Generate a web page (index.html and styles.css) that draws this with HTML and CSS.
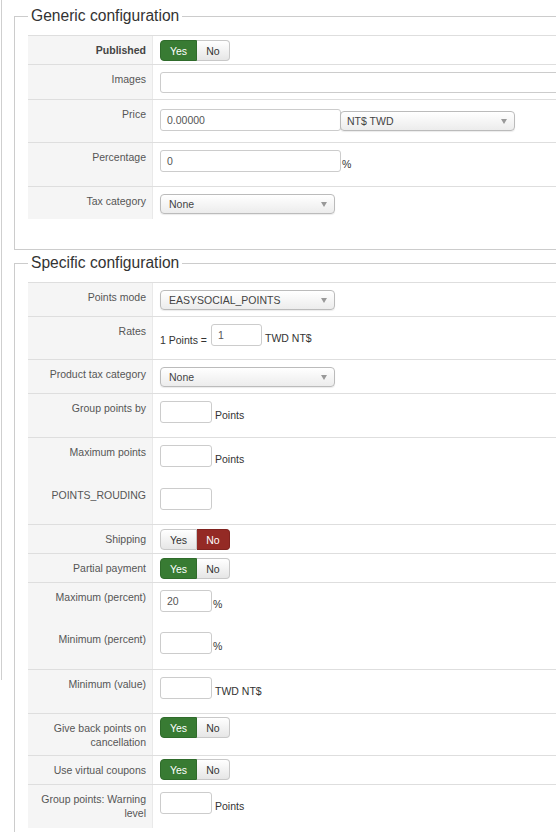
FILE: index.html
```html
<!DOCTYPE html>
<html>
<head>
<meta charset="utf-8">
<link rel="stylesheet" href="styles.css">
</head>
<body>
<div class="page">
  <div class="sidebar"></div>
  <div class="main">
    <fieldset class="box box-first">
      <legend>Generic configuration</legend>
      <div class="table">
        <div class="row h29">
          <div class="label bold">Published</div>
          <div class="value vt"><div class="toggle"><span class="btn yes on-green">Yes</span><span class="btn no">No</span></div></div>
        </div>
        <div class="row h35">
          <div class="label">Images</div>
          <div class="value"><span class="input wide"></span></div>
        </div>
        <div class="row h43">
          <div class="label">Price</div>
          <div class="value"><span class="input w180">0.00000</span><span class="select w175 sel-price"><span>NT$ TWD</span><span class="arrow"></span></span></div>
        </div>
        <div class="row h44">
          <div class="label">Percentage</div>
          <div class="value"><span class="input w180">0</span><span class="unit tight">%</span></div>
        </div>
        <div class="row h33">
          <div class="label">Tax category</div>
          <div class="value"><span class="select w175"><span>None</span><span class="arrow"></span></span></div>
        </div>
      </div>
    </fieldset>
    <fieldset class="box box-second">
      <legend>Specific configuration</legend>
      <div class="table">
        <div class="row h34">
          <div class="label">Points mode</div>
          <div class="value"><span class="select w175"><span>EASYSOCIAL_POINTS</span><span class="arrow"></span></span></div>
        </div>
        <div class="row h43">
          <div class="label">Rates</div>
          <div class="value"><span class="unit pre">1 Points =</span><span class="input w51">1</span><span class="unit">TWD NT$</span></div>
        </div>
        <div class="row h34">
          <div class="label">Product tax category</div>
          <div class="value"><span class="select w175"><span>None</span><span class="arrow"></span></span></div>
        </div>
        <div class="row h44">
          <div class="label">Group points by</div>
          <div class="value"><span class="input w52"></span><span class="unit">Points</span></div>
        </div>
        <div class="row h44">
          <div class="label">Maximum points</div>
          <div class="value"><span class="input w52"></span><span class="unit">Points</span></div>
        </div>
        <div class="row h43 noline">
          <div class="label">POINTS_ROUDING</div>
          <div class="value"><span class="input w52"></span></div>
        </div>
        <div class="row h29">
          <div class="label">Shipping</div>
          <div class="value vt"><div class="toggle"><span class="btn yes">Yes</span><span class="btn no on-red">No</span></div></div>
        </div>
        <div class="row h29">
          <div class="label">Partial payment</div>
          <div class="value vt"><div class="toggle"><span class="btn yes on-green">Yes</span><span class="btn no">No</span></div></div>
        </div>
        <div class="row h43">
          <div class="label">Maximum (percent)</div>
          <div class="value"><span class="input w52">20</span><span class="unit tight">%</span></div>
        </div>
        <div class="row h44 noline">
          <div class="label">Minimum (percent)</div>
          <div class="value"><span class="input w52"></span><span class="unit tight">%</span></div>
        </div>
        <div class="row h44">
          <div class="label">Minimum (value)</div>
          <div class="value"><span class="input w52"></span><span class="unit">TWD NT$</span></div>
        </div>
        <div class="row h42">
          <div class="label">Give back points on cancellation</div>
          <div class="value vt2"><div class="toggle"><span class="btn yes on-green">Yes</span><span class="btn no">No</span></div></div>
        </div>
        <div class="row h29">
          <div class="label">Use virtual coupons</div>
          <div class="value vt2"><div class="toggle"><span class="btn yes on-green">Yes</span><span class="btn no">No</span></div></div>
        </div>
        <div class="row h44">
          <div class="label">Group points: Warning level</div>
          <div class="value"><span class="input w52"></span><span class="unit">Points</span></div>
        </div>
      </div>
    </fieldset>
  </div>
</div>
</body>
</html>
```

FILE: styles.css
```css
html, body {
  margin: 0;
  padding: 0;
  background: #fff;
  overflow: hidden;
}
body {
  font-family: "Liberation Sans", Arial, Helvetica, sans-serif;
  font-size: 10.5px;
  color: #333;
}
.page {
  display: flex;
  align-items: flex-start;
  width: 720px;
}
.sidebar {
  width: 1px;
  height: 680px;
  border-right: 1px solid #cfcfcf;
  border-bottom: 1px solid #cfcfcf;
  box-sizing: border-box;
  flex: none;
  margin-left: 1px;
}
.main {
  margin-left: 12px;
  flex: 1;
}
.box {
  margin: 6px 0 0 0;
  padding: 0 0 29px 13px;
  border: 1px solid #cccccc;
  border-right: none;
  min-width: 0;
}
.box-first {
  margin-top: 7px;
  padding-bottom: 30px;
}
.box-second {
  margin-top: 4px;
}
legend {
  font-size: 15.6px;
  line-height: 18px;
  color: #333;
  padding: 0 3px;
  margin-left: 0;
}
.table {
  margin-top: 10px;
}
.row {
  display: grid;
  grid-template-columns: 125px 1fr;
  border-top: 1px solid #dedede;
  box-sizing: border-box;
}
.row.noline {
  border-top: none;
}
.h29 { height: 29px; }
.h33 { height: 33px; }
.h34 { height: 34px; }
.h35 { height: 35px; }
.h42 { height: 42px; }
.h43 { height: 43px; }
.h44 { height: 44px; }
.label {
  background: #f5f5f5;
  border-right: 1px solid #e9e9e9;
  text-align: right;
  padding: 7px 6px 0 8px;
  line-height: 14px;
  color: #555;
}
.label.bold {
  font-weight: bold;
  color: #444;
}
.value {
  padding: 7px 0 0 7px;
  display: flex;
  align-items: flex-end;
  align-self: start;
}
.value.vt {
  padding-top: 4px;
}
.value.vt2 {
  padding-top: 3px;
}
.input {
  display: flex;
  align-items: center;
  box-sizing: border-box;
  height: 22px;
  border: 1px solid #cccccc;
  border-radius: 3px;
  padding: 0 6px;
  color: #555;
  background: #fff;
  flex: none;
  line-height: 14px;
}
.input.wide { width: 440px; height: 21px; }
.w180 { width: 181px; }
.w52 { width: 52px; }
.w51 { width: 51px; }
.unit {
  line-height: 14px;
  margin: 0 0 1px 3px;
  color: #333;
}
.unit.tight {
  margin-left: 1px;
}
.unit.pre {
  margin: 0 4px -1px 0;
}
.select {
  display: flex;
  align-items: center;
  justify-content: space-between;
  box-sizing: border-box;
  height: 20px;
  border: 1px solid #bbbbbb;
  border-radius: 4px;
  padding: 0 7px 0 8px;
  background: linear-gradient(#ffffff, #ececec);
  box-shadow: 0 1px 1px rgba(0,0,0,0.08);
  color: #444;
  flex: none;
  align-self: flex-start;
}
.select.sel-price {
  margin-top: 4px;
  margin-left: -1px;
  padding-left: 6px;
}
.w175 { width: 175px; }
.arrow {
  width: 0;
  height: 0;
  border-left: 3px solid transparent;
  border-right: 3px solid transparent;
  border-top: 5px solid #999;
}
.toggle {
  display: flex;
}
.btn {
  display: flex;
  align-items: center;
  justify-content: center;
  box-sizing: border-box;
  height: 21px;
  border: 1px solid #c8c8c8;
  background: linear-gradient(#ffffff, #e6e6e6);
  color: #333;
}
.btn.yes {
  width: 37px;
  border-radius: 4px 0 0 4px;
}
.btn.no {
  width: 33px;
  border-left: none;
  border-radius: 0 4px 4px 0;
}
.btn.on-green {
  background: #387b33;
  border-color: #2f6b2b;
  color: #fff;
}
.btn.on-red {
  background: #942a25;
  border-color: #80231f;
  color: #fff;
}
```
